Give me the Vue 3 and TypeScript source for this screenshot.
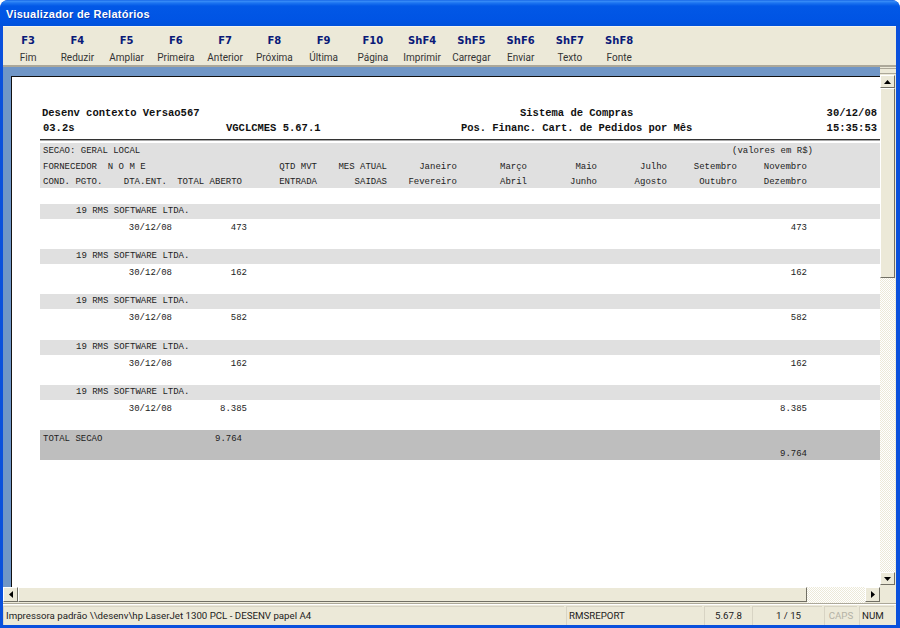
<script setup lang="ts">
interface Key { key: string; label: string }
const keys: Key[] = [
  { key: 'F3', label: 'Fim' }, { key: 'F4', label: 'Reduzir' }, { key: 'F5', label: 'Ampliar' },
  { key: 'F6', label: 'Primeira' }, { key: 'F7', label: 'Anterior' }, { key: 'F8', label: 'Próxima' },
  { key: 'F9', label: 'Última' }, { key: 'F10', label: 'Página' }, { key: 'ShF4', label: 'Imprimir' },
  { key: 'ShF5', label: 'Carregar' }, { key: 'ShF6', label: 'Enviar' }, { key: 'ShF7', label: 'Texto' },
  { key: 'ShF8', label: 'Fonte' },
]
const head1 = ['QTD MVT', 'MES ATUAL', 'Janeiro', 'Março', 'Maio', 'Julho', 'Setembro', 'Novembro']
const head2 = ['ENTRADA', 'SAIDAS', 'Fevereiro', 'Abril', 'Junho', 'Agosto', 'Outubro', 'Dezembro']
const values = ['473', '162', '582', '162', '8.385']
</script>

<template>
  <div class="window">
    <div class="title">Visualizador de Relatórios</div>
    <div class="toolbar">
      <div v-for="k in keys" :key="k.key" class="tool">
        <b>{{ k.key }}</b>
        <span>{{ k.label }}</span>
      </div>
    </div>
    <div class="middle">
      <div class="viewer">
        <div class="page">
          <div class="top-line">
            <span>Desenv contexto Versao567</span><span></span>
            <span class="sys">Sistema de Compras</span><span class="end">30/12/08</span>
          </div>
          <div class="top-line">
            <span class="indent">03.2s</span><span>VGCLCMES 5.67.1</span>
            <span class="pos">Pos. Financ. Cart. de Pedidos por Mês</span><span class="end">15:35:53</span>
          </div>
          <div class="rule"></div>

          <div class="row band first">
            <span class="left wide">SECAO: GERAL LOCAL</span>
            <span class="valores">(valores em R$)</span>
          </div>
          <div class="row band">
            <span class="left wide">FORNECEDOR&nbsp;&nbsp;N O M E</span>
            <span v-for="h in head1" :key="h" class="cell">{{ h }}</span>
          </div>
          <div class="row band">
            <span class="left cond">COND. PGTO.<em>DTA.ENT.</em></span>
            <span class="cell inset">TOTAL ABERTO</span>
            <span v-for="h in head2" :key="h" class="cell">{{ h }}</span>
          </div>
          <div class="row"></div>

          <template v-for="(v, i) in values" :key="i">
            <div class="row band sup"><span class="supplier">19 RMS SOFTWARE LTDA.</span></div>
            <div class="row">
              <span class="cell">30/12/08</span>
              <span class="cell">{{ v }}</span>
              <span class="cell last">{{ v }}</span>
            </div>
            <div class="row"></div>
          </template>

          <div class="row total">
            <span class="left">TOTAL SECAO</span>
            <span class="cell inset">9.764</span>
          </div>
          <div class="row total">
            <span class="cell last">9.764</span>
          </div>
        </div>
      </div>
      <div class="vscroll">
        <div class="notch"></div>
        <div class="btn"><svg width="7" height="4"><polygon points="3.5,0 7,4 0,4" fill="#000" /></svg></div>
        <div class="thumb v"></div>
        <div class="track"></div>
        <div class="btn"><svg width="7" height="4"><polygon points="0,0 7,0 3.5,4" fill="#000" /></svg></div>
      </div>
    </div>
    <div class="hscroll">
      <div class="btn h"><svg width="4" height="7"><polygon points="4,0 4,7 0,3.5" fill="#000" /></svg></div>
      <div class="thumb h"></div>
      <div class="track"></div>
      <div class="btn h"><svg width="4" height="7"><polygon points="0,0 4,3.5 0,7" fill="#000" /></svg></div>
      <div class="corner"></div>
    </div>
    <div class="status">
      <div class="panel p1">Impressora padrão \\desenv\hp LaserJet 1300 PCL - DESENV papel A4</div>
      <div class="panel p2">RMSREPORT</div>
      <div class="panel p3">5.67.8</div>
      <div class="panel p4">1 / 15</div>
      <div class="panel p5">CAPS</div>
      <div class="panel p6">NUM</div>
    </div>
  </div>
</template>

<style>
html, body { margin: 0; background: #fff; }
</style>

<style scoped>
.window {
  width: 900px;
  height: 628px;
  box-sizing: border-box;
  padding: 0 4px 3px 3px;
  display: flex;
  flex-direction: column;
  overflow: hidden;
  background: #0a50dc;
  border-radius: 8px 8px 0 0;
  font-family: Roboto, "Liberation Sans", Arial, sans-serif;
}
.title {
  height: 26px;
  margin: 0 -4px 0 -3px;
  padding-left: 6px;
  flex: none;
  box-sizing: border-box;
  line-height: 29px;
  color: #fff;
  font-family: "Liberation Sans", Arial, sans-serif;
  font-size: 11px;
  font-weight: bold;
  letter-spacing: 0.25px;
  text-shadow: 1px 1px 0 #0a3cb0;
  background: linear-gradient(#0a58e0 0, #3c90f8 1px, #1c74f0 3px, #0258e6 6px, #0054e4 20px, #0052dc 26px);
  border-radius: 8px 8px 0 0;
}
.toolbar {
  flex: none;
  height: 41px;
  box-sizing: border-box;
  display: flex;
  background: #ece9d8;
  border-top: 1px solid #f6f4ec;
  border-bottom: 2px solid #aca899;
}
.tool {
  width: 49.25px;
  flex: none;
  padding-top: 7px;
  display: flex;
  flex-direction: column;
  align-items: center;
}
.tool:first-child { margin-left: 0.5px; }
.tool b {
  font: bold 10px/14px "DejaVu Sans", Verdana, sans-serif;
  color: #0a1a78;
}
.tool span {
  font-size: 10px;
  line-height: 13px;
  margin-top: 3px;
  color: #333;
  white-space: nowrap;
}
.middle { flex: none; height: 520px; display: flex; }
.viewer {
  flex: 1;
  min-width: 0;
  box-sizing: border-box;
  padding: 9px 0 0 8px;
  background: #7096c6;
  overflow: hidden;
}
.page {
  height: 100%;
  box-sizing: border-box;
  padding: 28.5px 0 0 28px;
  background: #fff;
  border-top: 1px solid #111;
  border-left: 1px solid #111;
  font-family: "Liberation Mono", "Courier New", monospace;
  color: #222;
}
.top-line {
  display: grid;
  grid-template-columns: 184px 235px 231px 185px;
  margin-left: 2px;
  height: 15px;
  line-height: 15px;
  font-size: 10.5px;
  font-weight: bold;
  color: #111;
  white-space: nowrap;
}
.indent { padding-left: 1px; }
.sys { padding-left: 59px; }
.pos { letter-spacing: -0.05px; }
.end { text-align: right; }
.rule {
  height: 1px;
  margin-top: 3px;
  margin-bottom: 2.67px;
  background: #333;
  border-bottom: 1px solid #aaa;
}
.row {
  display: grid;
  grid-template-columns: 132px 75px repeat(8, 70px) 1fr;
  height: 15.11px;
  line-height: 19px;
  font-size: 9px;
  white-space: nowrap;
}
.row.first { line-height: 16px; }
.row.sup { line-height: 15px; }
.band { background: #e0e0e0; }
.total { background: #bebebe; }
.left { padding-left: 3px; }
.wide { grid-column: 1 / span 2; }
.cond { display: flex; justify-content: space-between; padding-right: 5px; }
.cond em { font-style: normal; }
.cell { text-align: right; }
.inset { padding-right: 5px; grid-column: 2; }
.last { grid-column: 10; }
.valores { grid-column: 9 / span 3; padding-left: 65px; }
.supplier { grid-column: 1 / span 3; padding-left: 36px; }
.vscroll {
  width: 16px;
  flex: none;
  display: flex;
  flex-direction: column;
  background: #ece9d8;
  box-sizing: border-box;
  padding-bottom: 2px;
}
.notch {
  height: 6px;
  flex: none;
  border-top: 1px solid #aca899;
  border-bottom: 1px solid #aca899;
  box-sizing: border-box;
  margin: 1px 0 1px;
}
.btn {
  flex: none;
  box-sizing: border-box;
  width: 15px;
  height: 13px;
  display: flex;
  align-items: center;
  justify-content: center;
  background: #ece9d8;
  border: 1px solid;
  border-color: #fff #716f64 #716f64 #fff;
}
.btn.h { height: 15px; width: 15px; }
.thumb {
  flex: none;
  box-sizing: border-box;
  background: #ece9d8;
  border: 1px solid;
  border-color: #fff #716f64 #716f64 #fff;
}
.thumb.v { width: 15px; height: 190px; }
.thumb.h { width: 789px; height: 15px; }
.track {
  flex: 1;
  background: repeating-conic-gradient(#fff 0 25%, #ece9d8 0 50%) 0 0 / 2px 2px;
}
.vscroll .track { width: 15px; }
.hscroll {
  flex: none;
  height: 16px;
  display: flex;
  background: #ece9d8;
}
.corner { width: 16px; flex: none; }
.status {
  flex: 1;
  min-height: 0;
  display: flex;
  gap: 2px;
  padding-top: 2px;
  background: #ece9d8;
  border-top: 1px solid #aca899;
  box-shadow: inset 0 1px 0 #fff;
  font-size: 9.7px;
  color: #222;
}
.panel {
  box-sizing: border-box;
  flex: none;
  height: 100%;
  line-height: 17px;
  padding-left: 2px;
  white-space: nowrap;
  border-left: 1px solid #d8d4c4;
  border-top: 1px solid #d8d4c4;
}
.p1 { width: 561px; }
.p2 { width: 136px; }
.p3 { width: 46px; text-align: center; }
.p4 { width: 70px; text-align: center; }
.p5 { width: 33px; text-align: center; color: #b4b2a6; padding-left: 0; }
.p6 { width: 35px; }
</style>
